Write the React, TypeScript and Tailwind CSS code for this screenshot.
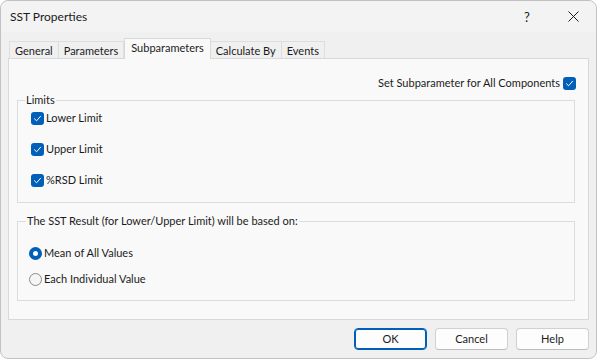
import React from 'react'

const font = { fontFamily: '"Segoe UI", Lato, "Noto Sans", sans-serif' }

const tabs = ['General', 'Parameters', 'Subparameters', 'Calculate By', 'Events']

const CheckBox = () => (
  <span className="flex h-[13px] w-[13px] shrink-0 items-center justify-center rounded-[3px] bg-[#005fb8]">
    <svg width="9" height="9" viewBox="0 0 9 9" fill="none">
      <path d="M1.5 4.8 L3.6 6.8 L7.6 2.2" stroke="#fff" strokeWidth="1" strokeLinecap="round" strokeLinejoin="round" />
    </svg>
  </span>
)

const Radio = ({ checked }: { checked?: boolean }) =>
  checked ? (
    <span className="flex h-[13px] w-[13px] shrink-0 items-center justify-center rounded-full bg-[#005fb8]">
      <span className="h-[5px] w-[5px] rounded-full bg-white" />
    </span>
  ) : (
    <span className="h-[13px] w-[13px] shrink-0 rounded-full border border-[#8a8a8a] bg-[#f5f5f5]" />
  )

export default function App() {
  return (
    <div className="h-[359px] w-[597px] bg-white text-[11px] leading-[16px] text-[#1b1b1b]" style={font}>
      <div className="flex h-full w-full flex-col rounded-[8px] border border-[#c2c2c2] bg-[#f0f0f0]">
        {/* title bar */}
        <div className="flex h-[31px] items-center rounded-t-[8px] bg-[#f3f3f3] pl-[9px]">
          <span className="text-[12px]">SST Properties</span>
          <span className="ml-auto w-[46px] text-center text-[13px]">?</span>
          <span className="flex w-[46px] items-center justify-center">
            <svg width="11" height="11" viewBox="0 0 11 11">
              <path d="M0.5 0.5 L10.5 10.5 M10.5 0.5 L0.5 10.5" stroke="#1b1b1b" strokeWidth="1" />
            </svg>
          </span>
        </div>

        {/* tabs */}
        <div className="mt-[6px] flex h-[20px] items-end pl-[8px]">
          {tabs.map((t) =>
            t === 'Subparameters' ? (
              <div
                key={t}
                className="relative z-10 -mb-px flex h-[21px] items-start border-x border-t border-[#d9d9d9] bg-[#f9f9f9] px-[6px] pt-[1px]"
              >
                {t}
              </div>
            ) : (
              <div key={t} className="flex h-[17px] items-center border-t border-r border-[#dedede] first:border-l px-[5px] pt-[1px]">
                {t}
              </div>
            )
          )}
        </div>

        {/* panel */}
        <div className="mx-[7px] flex h-[262px] flex-col border border-[#d9d9d9] bg-[#f9f9f9] pt-[16px]">
          <div className="flex items-center justify-end gap-[3px] pr-[12px]">
            <span>Set Subparameter for All Components</span>
            <CheckBox />
          </div>

          <fieldset className="mt-[1px] ml-[8px] mr-[13px] border border-[#dcdcdc] pl-[7px] pb-[14px]">
            <legend className="px-[1px]">Limits</legend>
            <div className="flex flex-col gap-[15px] pt-[2px] pl-[6px]">
              {['Lower Limit', 'Upper Limit', '%RSD Limit'].map((l) => (
                <div key={l} className="flex items-center gap-[2px]">
                  <CheckBox />
                  <span>{l}</span>
                </div>
              ))}
            </div>
          </fieldset>

          <fieldset className="mt-[10px] ml-[8px] mr-[13px] border border-[#dcdcdc] pl-[8px] pb-[13px]">
            <legend className="px-[1px]">The SST Result (for Lower/Upper Limit) will be based on:</legend>
            <div className="flex flex-col gap-[10px] pt-[16px] pl-[3px]">
              <div className="flex items-center gap-[2px]">
                <Radio checked />
                <span>Mean of All Values</span>
              </div>
              <div className="flex items-center gap-[2px]">
                <Radio />
                <span>Each Individual Value</span>
              </div>
            </div>
          </fieldset>
        </div>

        {/* buttons */}
        <div className="mt-[8px] flex justify-end gap-[8px] pr-[7px]">
          <button className="h-[22px] w-[73px] rounded-[4px] border border-[#005fb8] bg-[#fdfdfd] shadow-[inset_0_0_0_1px_#005fb8]">OK</button>
          <button className="h-[22px] w-[73px] rounded-[4px] border border-[#d0d0d0] border-b-[#bcbcbc] bg-[#fdfdfd]">Cancel</button>
          <button className="h-[22px] w-[73px] rounded-[4px] border border-[#d0d0d0] border-b-[#bcbcbc] bg-[#fdfdfd]">Help</button>
        </div>
      </div>
    </div>
  )
}
